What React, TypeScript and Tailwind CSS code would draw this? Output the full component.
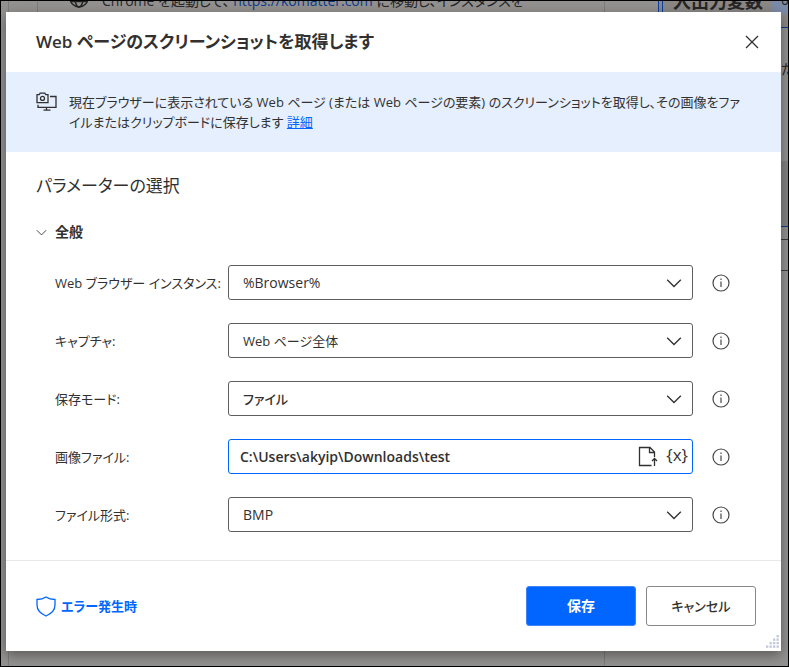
import React from "react";

const INK = "text-[#323130]";

function Chevron({ className }: { className?: string }) {
  return (
    <svg viewBox="0 0 16 16" className={className} fill="none" stroke="currentColor" aria-hidden="true">
      <path d="M1.2 4.7 8 11.5l6.800-6.800" strokeWidth="1.300" />
    </svg>
  );
}

function InfoButton({ label }: { label: string }) {
  return (
    <button type="button" aria-label={label} className="size-[18px] shrink-0">
      <svg viewBox="0 0 18 18" fill="none" stroke="#484644" aria-hidden="true">
        <circle cx="9" cy="9" r="8" strokeWidth="1.200" />
        <path d="M9 7.600v5.400" strokeWidth="1.200" />
        <path d="M9 4.600v1.400" strokeWidth="1.200" />
      </svg>
    </button>
  );
}

function Row({ id, label, children }: { id: string; label: string; children: React.ReactNode }) {
  return (
    <div className="flex items-center">
      <label htmlFor={id} className="w-[173px] shrink-0 whitespace-nowrap">
        {label}
      </label>
      <div className="min-w-0 flex-1">{children}</div>
      <div className="ml-[19px] flex">
        <InfoButton label={`${label} 詳細`} />
      </div>
    </div>
  );
}

function SelectRow({ id, label, value, look = "" }: { id: string; label: string; value: string; look?: string }) {
  return (
    <Row id={id} label={label}>
      <div className="relative">
        <select
          id={id}
          defaultValue={value}
          className={`block h-[35px] w-full appearance-none rounded-[3px] border border-[#605e5c] bg-white pr-10 pl-[14px] outline-none ${look}`}
        >
          <option>{value}</option>
        </select>
        <Chevron className="pointer-events-none absolute top-1/2 right-[11px] size-4 -translate-y-1/2" />
      </div>
    </Row>
  );
}

function Backdrop() {
  return (
    <div aria-hidden="true" className="absolute inset-0 overflow-hidden text-[14px] text-[#262626]">
      <div className="absolute top-0 left-[7px] h-full w-px bg-[#7c7c7c]" />
      <div className="absolute top-0 left-[36px] h-[11px] w-px bg-[#7c7c7c]" />
      <div className="absolute top-0 left-[603px] h-full w-px bg-[#7c7c7c]" />
      <svg viewBox="0 0 20 20" className="absolute -top-[13px] left-[68px] size-5" fill="none" stroke="#222" strokeWidth="1.400">
        <circle cx="10" cy="10" r="9" />
        <ellipse cx="10" cy="10" rx="4" ry="9" />
        <path d="M2 6.500h16M2 13.500h16" />
      </svg>
      <div className="absolute -top-[10px] left-[101px] leading-5 whitespace-nowrap">
        Chrome を起動して、 <span className="text-[#0a3a8c]">https://komatter.com</span> に移動し、インスタンスを
      </div>
      <div className="absolute top-0 right-0 left-[657px] h-[27px] border-b border-l border-[#0a3fa0] bg-[#8b8886]">
        <div className="ml-[3px] h-full border-l border-[#0a3fa0]" />
      </div>
      <div className="absolute -top-[12px] left-[672px] text-[18px] leading-6 font-bold whitespace-nowrap">入出力変数</div>
      <div className="absolute top-0 right-0 h-[13px] w-[17px] overflow-hidden bg-[#7b8ba8] pl-[10px] leading-none">
        <span className="-mt-2 block">0</span>
      </div>
      <div className="absolute top-[58px] left-[780px]">だ</div>
      <div className="absolute top-[160px] right-0 h-[66px] w-[7px] border-b border-[#0a3fa0] bg-[#858382]" />
      <div className="absolute top-[238px] right-0 h-8 w-[7px] border-y border-[#3c3c3c]" />
    </div>
  );
}

function ResizeGrip() {
  const dots = [
    [9, 0],
    [6, 3], [9, 3],
    [3, 6], [6, 6], [9, 6],
    [0, 9], [3, 9], [6, 9], [9, 9],
  ];
  return (
    <svg viewBox="0 0 12 12" className="absolute right-[1px] bottom-[2px] size-[14px]" fill="#c3c9dc" aria-hidden="true">
      {dots.map(([x, y]) => (
        <rect key={`${x}-${y}`} x={x} y={y} width="2" height="2" />
      ))}
    </svg>
  );
}

export default function App() {
  return (
    <div
      className={`relative min-h-screen overflow-hidden border border-black bg-[#949291] pt-[11px] pr-[7px] pb-[15px] pl-[5px] text-[13px] leading-5 font-[Open_Sans,Noto_Sans_CJK_JP,sans-serif] [font-feature-settings:'palt'] ${INK}`}
    >
      <Backdrop />
      <section role="dialog" aria-labelledby="title" className="relative bg-white shadow-[0_4px_12px_rgba(0,0,0,0.4)]">
        <header className="flex h-[60px] items-center justify-between pr-[21px] pl-[30px]">
          <h1 id="title" className="text-[17px] font-semibold">Web ページのスクリーンショットを取得します</h1>
          <button type="button" aria-label="閉じる" className="size-4">
            <svg viewBox="0 0 16 16" fill="none" stroke="#323130" strokeWidth="1.300" aria-hidden="true">
              <path d="m2 2 12 12M14 2 2 14" />
            </svg>
          </button>
        </header>

        <div className="flex min-h-20 items-start gap-3 bg-[#e5effe] pt-5 pr-8 pl-[30px]">
          <svg viewBox="0 0 21 19" className="h-[19px] w-[21px] shrink-0" fill="none" stroke="#323130" strokeWidth="1.300" aria-hidden="true">
            <path d="M1 2.700h2.200l1-1.500h4.600l1 1.500H12v8H1z" />
            <circle cx="6.500" cy="6.400" r="2" />
            <path d="M14 4.500h6v10.800H2v-2.500M10.500 15.500v2.500M7.500 18.200h7" />
          </svg>
          <p>
            現在ブラウザーに表示されている Web ページ (または Web ページの要素) のスクリーンショットを取得し、その画像をファイルまたはクリップボードに保存します{" "}
            <a href="#details" className="text-[#0066ff] underline">詳細</a>
          </p>
        </div>

        <form className="pt-5 pr-[51px] pb-7 pl-[30px]">
          <h2 className="text-[17px] leading-7">パラメーターの選択</h2>
          <button type="button" aria-expanded="true" className="mt-[22px] flex items-center gap-2 text-[14px] font-semibold">
            <Chevron className="size-[11px]" />
            全般
          </button>
          <div className="mt-[23px] flex flex-col gap-[23px] pl-[19px]">
            <SelectRow id="browser" label="Web ブラウザー インスタンス:" value="%Browser%" look="text-[14px]" />
            <SelectRow id="capture" label="キャプチャ:" value="Web ページ全体" />
            <SelectRow id="mode" label="保存モード:" value="ファイル" look="font-medium" />
            <Row id="file" label="画像ファイル:">
              <div className="flex h-[35px] items-center rounded-[3px] border border-[#0066ff] bg-white pr-1 pl-[11px]">
                <input id="file" type="text" defaultValue="C:\Users\akyip\Downloads\test" className="min-w-0 flex-1 bg-transparent text-[14px] font-semibold outline-none" />
                <button type="button" aria-label="ファイルの選択" className="h-[21px] w-5">
                  <svg viewBox="0 0 20 21" fill="none" stroke="#323130" strokeWidth="1.300" aria-hidden="true">
                    <path d="M13.500 19.500H1.500v-18h10.500l4.500 4.500v5M11.500 1.500v5h5" />
                    <path d="M16.500 20v-7.500M14 15l2.500-2.500L19 15" />
                  </svg>
                </button>
                <button type="button" aria-label="変数の選択" className="ml-2 pb-1 text-[17px]">{"{x}"}</button>
              </div>
            </Row>
            <SelectRow id="format" label="ファイル形式:" value="BMP" look="text-[14px]" />
          </div>
        </form>

        <footer className="flex h-[91px] items-center border-t border-[#e8e8e8] pr-[25px] pl-[30px]">
          <button type="button" className="flex items-center gap-[5px] font-semibold text-[#0066ff]">
            <svg viewBox="0 0 20 21" className="h-[21px] w-5" fill="none" stroke="currentColor" strokeWidth="1.300" aria-hidden="true">
              <path d="M10 1c2.500 1.700 5.300 2.500 9 2.500V9c0 5-3.500 8.600-9 11C4.500 17.600 1 14 1 9V3.500C4.700 3.500 7.500 2.700 10 1z" />
            </svg>
            エラー発生時
          </button>
          <div className="ml-auto flex gap-[10px]">
            <button type="button" className="h-10 w-[110px] rounded-[3px] border border-[#3d85f5] bg-[#0066ff] text-[14px] font-semibold text-white">保存</button>
            <button type="button" className="h-10 w-[110px] rounded-[3px] border border-[#8a8886] bg-white font-medium">キャンセル</button>
          </div>
        </footer>
        <ResizeGrip />
      </section>
    </div>
  );
}
